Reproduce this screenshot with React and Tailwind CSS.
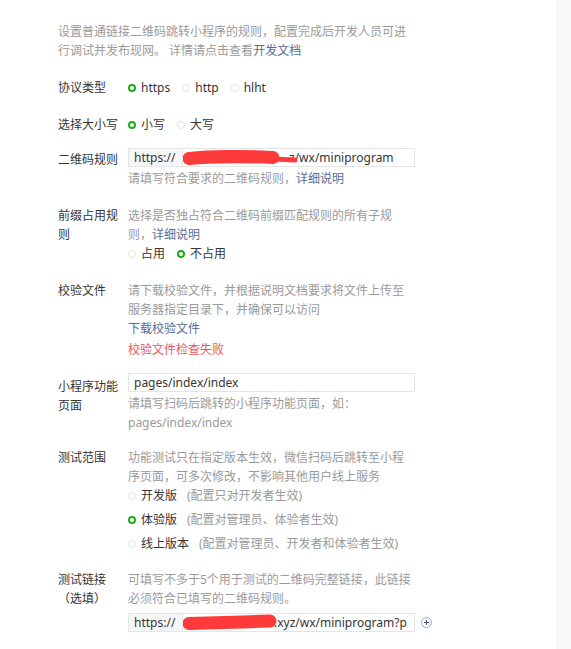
import React from 'react';
import clsx from 'clsx';

const Radio = ({ checked, children, extra }) => (
  <span className="inline-flex items-center h-[19px]">
    <span
      className={clsx(
        'w-[8px] h-[8px] rounded-full shrink-0 mr-[5px] box-border',
        checked ? 'border-2 border-[#1aad19]' : 'border border-[#e3e3e3]'
      )}
    />
    <span className="text-[#353535]">{children}</span>
    {extra && <span className="ml-[10px] text-[#9a9a9a]">{extra}</span>}
  </span>
);

const Field = ({ label, labelClass, className, children }) => (
  <div className={clsx('flex', className)}>
    <div className={clsx('w-[62px] mr-[8px] shrink-0 text-[#353535] leading-[19px]', labelClass)}>{label}</div>
    <div className="w-[287px] leading-[19px]">{children}</div>
  </div>
);

const Hint = ({ children, className }) => (
  <p className={clsx('w-[286px] text-[#9a9a9a] leading-[19px]', className)}>{children}</p>
);

const Link = ({ children }) => <a className="text-[#576b95] cursor-pointer">{children}</a>;

// red scribble that hides the domain in the screenshot
const Scribble = ({ variant }) =>
  variant === 1 ? (
    <svg className="absolute left-[-1px] top-[1px]" width="118" height="17" viewBox="0 0 118 17">
      <path d="M7 8.5 C 30 6, 70 6.5, 91 7.5" stroke="#fd3b3b" strokeWidth="13" strokeLinecap="round" fill="none" />
      <path d="M90 9 C 100 9.5, 108 10, 113 10" stroke="#fd3b3b" strokeWidth="5" strokeLinecap="round" fill="none" />
    </svg>
  ) : (
    <svg className="absolute left-[-1px] top-[-1px]" width="100" height="19" viewBox="0 0 100 19">
      <path d="M7 10.5 C 30 10, 60 9, 88 8" stroke="#fd3b3b" strokeWidth="13" strokeLinecap="round" fill="none" />
    </svg>
  );

const UrlInput = ({ value, offset, variant }) => (
  <div className="flex h-[19px] w-[287px] border border-[#e5e5e5] bg-white text-[#353535]">
    <span className="flex items-center w-[54px] shrink-0 pl-[5px] bg-[#f5f6f7] border-r border-[#e5e5e5]">https://</span>
    <div className={clsx('relative flex-1 flex items-center overflow-hidden whitespace-nowrap', offset)}>
      {value}
      <Scribble variant={variant} />
    </div>
  </div>
);

const PlusIcon = () => (
  <svg width="11" height="11" viewBox="0 0 11 11" className="ml-[6px] shrink-0">
    <circle cx="5.5" cy="5.5" r="5" fill="none" stroke="#9aa6c4" strokeWidth="1" />
    <path d="M5.5 3 V8 M3 5.5 H8" stroke="#3d5188" strokeWidth="1.1" />
  </svg>
);

export default function App() {
  return (
    <div className="flex min-h-screen bg-white text-[12px] font-[family-name:'Noto_Sans','Noto_Sans_CJK_SC',sans-serif]">
      <main className="flex-1 pl-[58px] pt-[22px] pb-[20px]">
        <p className="w-[357px] text-[#9a9a9a] leading-[19px]">
          设置普通链接二维码跳转小程序的规则，配置完成后开发人员可进行调试并发布现网。 详情请点击查看<Link>开发文档</Link>
        </p>

        <Field label="协议类型" className="mt-[18px]">
          <div className="flex gap-[12px]">
            <Radio checked>https</Radio>
            <Radio>http</Radio>
            <Radio>hlht</Radio>
          </div>
        </Field>

        <Field label="选择大小写" className="mt-[18px]">
          <div className="flex gap-[12px]">
            <Radio checked>小写</Radio>
            <Radio>大写</Radio>
          </div>
        </Field>

        <Field label="二维码规则" labelClass="pt-[2px]" className="mt-[14px]">
          <UrlInput value="z/wx/miniprogram" offset="pl-[106px]" variant={1} />
          <Hint className="mt-[2px]">
            请填写符合要求的二维码规则，<Link>详细说明</Link>
          </Hint>
        </Field>

        <Field label="前缀占用规则" className="mt-[18px]">
          <Hint>
            选择是否独占符合二维码前缀匹配规则的所有子规则，<Link>详细说明</Link>
          </Hint>
          <div className="flex gap-[12px]">
            <Radio>占用</Radio>
            <Radio checked>不占用</Radio>
          </div>
        </Field>

        <Field label="校验文件" className="mt-[18px]">
          <Hint>请下载校验文件，并根据说明文档要求将文件上传至服务器指定目录下，并确保可以访问</Hint>
          <div>
            <Link>下载校验文件</Link>
          </div>
          <div className="mt-[2px] text-[#e8585c]">校验文件检查失败</div>
        </Field>

        <Field label="小程序功能页面" labelClass="pt-[4px]" className="mt-[14px]">
          <div className="flex items-center h-[19px] w-[287px] border border-[#e5e5e5] bg-white pl-[5px] text-[#353535]">
            pages/index/index
          </div>
          <Hint className="mt-[2px]">请填写扫码后跳转的小程序功能页面，如：pages/index/index</Hint>
        </Field>

        <Field label="测试范围" className="mt-[16px]">
          <Hint>功能测试只在指定版本生效，微信扫码后跳转至小程序页面，可多次修改，不影响其他用户线上服务</Hint>
          <div className="flex flex-col gap-[5px]">
            <Radio extra="(配置只对开发者生效)">开发版</Radio>
            <Radio checked extra="(配置对管理员、体验者生效)">体验版</Radio>
            <Radio extra="(配置对管理员、开发者和体验者生效)">线上版本</Radio>
          </div>
        </Field>

        <Field label="测试链接（选填）" className="mt-[17px]">
          <Hint>可填写不多于5个用于测试的二维码完整链接，此链接必须符合已填写的二维码规则。</Hint>
          <div className="mt-[5px] flex items-center w-[310px]">
            <UrlInput value=".xyz/wx/miniprogram?p" offset="pl-[91px]" variant={2} />
            <PlusIcon />
          </div>
        </Field>
      </main>
      <aside className="w-[14px] shrink-0 bg-[#f6f8f9] border-l border-[#eceef1]" />
    </div>
  );
}
